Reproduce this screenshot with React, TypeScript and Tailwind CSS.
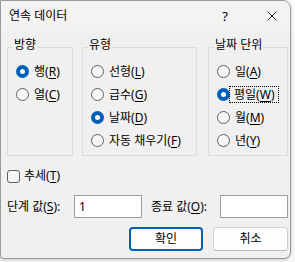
import type { ReactNode } from 'react';

function Mn({ label, k }: { label: string; k: string }) {
  return (
    <>
      {label}(<span className="underline underline-offset-[2px]">{k}</span>)
    </>
  );
}

function Radio({ children, checked, focus }: { children: ReactNode; checked?: boolean; focus?: boolean }) {
  return (
    <div className="flex h-[23px] items-center">
      {checked ? (
        <span className="flex h-[13px] w-[13px] shrink-0 items-center justify-center rounded-full bg-[#005fb8]">
          <span className="h-[5px] w-[5px] rounded-full bg-white" />
        </span>
      ) : (
        <span className="h-[13px] w-[13px] shrink-0 rounded-full border border-[#5f5f5f] bg-[#f6f6f6]" />
      )}
      {focus ? (
        <span className="-ml-[1px] flex h-[17px] items-center border border-dotted border-black px-[4px] whitespace-nowrap">
          {children}
        </span>
      ) : (
        <span className="ml-[5px] whitespace-nowrap">{children}</span>
      )}
    </div>
  );
}

function Group({ title, width, children }: { title: string; width: string; children: ReactNode }) {
  return (
    <fieldset className={`h-[119px] shrink-0 border border-[#dcdcdc] ${width}`}>
      <legend className="ml-[5px] px-[1px] pb-[4px] leading-[16px]">{title}</legend>
      <div className="pl-[8px] pt-[3px]">{children}</div>
    </fieldset>
  );
}

export default function App() {
  return (
    <div className="h-[262px] w-[295px] bg-[#f8f8f8] font-['Noto_Sans','Noto_Sans_CJK_KR',sans-serif] text-[12px] text-black">
      <div className="flex h-[259px] w-[291px] flex-col overflow-hidden rounded-tr-[8px] rounded-br-[7px] rounded-bl-[4px] border border-[#9a9a9a] bg-[#f0f0f0] shadow-[0_1px_3px_rgba(0,0,0,0.2)]">
        <div className="flex h-[30px] shrink-0 items-center bg-[#f3f3f3] pl-[8px] pr-[13px]">
          <span>연속 데이터</span>
          <span className="ml-auto text-[13px] leading-none">?</span>
          <svg className="ml-[39px]" width="10" height="10" viewBox="0 0 10 10">
            <path d="M0.5 0.5 L9.5 9.5 M9.5 0.5 L0.5 9.5" stroke="#1a1a1a" strokeWidth="1" />
          </svg>
        </div>

        <div className="flex flex-col pl-[6px]">
          <div className="mt-[6px] flex">
            <Group title="방향" width="w-[66px]">
              <Radio checked>
                <Mn label="행" k="R" />
              </Radio>
              <Radio>
                <Mn label="열" k="C" />
              </Radio>
            </Group>
            <div className="ml-[9px] shrink-0">
              <Group title="유형" width="w-[115px]">
                <Radio>
                  <Mn label="선형" k="L" />
                </Radio>
                <Radio>
                  <Mn label="급수" k="G" />
                </Radio>
                <Radio checked>
                  <Mn label="날짜" k="D" />
                </Radio>
                <Radio>
                  <Mn label="자동 채우기" k="F" />
                </Radio>
              </Group>
            </div>
            <div className="ml-[11px] shrink-0">
              <Group title="날짜 단위" width="w-[80px]">
                <Radio>
                  <Mn label="일" k="A" />
                </Radio>
                <Radio checked focus>
                  <Mn label="평일" k="W" />
                </Radio>
                <Radio>
                  <Mn label="월" k="M" />
                </Radio>
                <Radio>
                  <Mn label="년" k="Y" />
                </Radio>
              </Group>
            </div>
          </div>

          <div className="mt-[10px] flex h-[20px] items-center">
            <span className="h-[13px] w-[13px] rounded-[3px] border border-[#5f5f5f] bg-[#f6f6f6]" />
            <span className="ml-[4px]">
              <Mn label="추세" k="T" />
            </span>
          </div>

          <div className="mt-[9px] flex h-[23px] items-center">
            <span className="w-[67px] shrink-0 whitespace-nowrap">
              <Mn label="단계 값" k="S" />:
            </span>
            <div className="flex h-[23px] w-[68px] shrink-0 items-center border border-[#9c9c9c] bg-white pl-[4px]">1</div>
            <span className="ml-[9px] w-[69px] shrink-0 whitespace-nowrap">
              <Mn label="종료 값" k="O" />:
            </span>
            <div className="h-[23px] w-[68px] shrink-0 border border-[#9c9c9c] bg-white" />
          </div>

          <div className="mt-[9px] flex h-[24px] pl-[122px]">
            <button className="h-[24px] w-[74px] shrink-0 rounded-[4px] border-2 border-[#005fb8] bg-[#fdfdfd]">확인</button>
            <button className="ml-[10px] h-[24px] w-[75px] shrink-0 rounded-[4px] border border-[#d0d0d0] border-b-[#b8b8b8] bg-[#fdfdfd]">
              취소
            </button>
          </div>
        </div>
      </div>
    </div>
  );
}
